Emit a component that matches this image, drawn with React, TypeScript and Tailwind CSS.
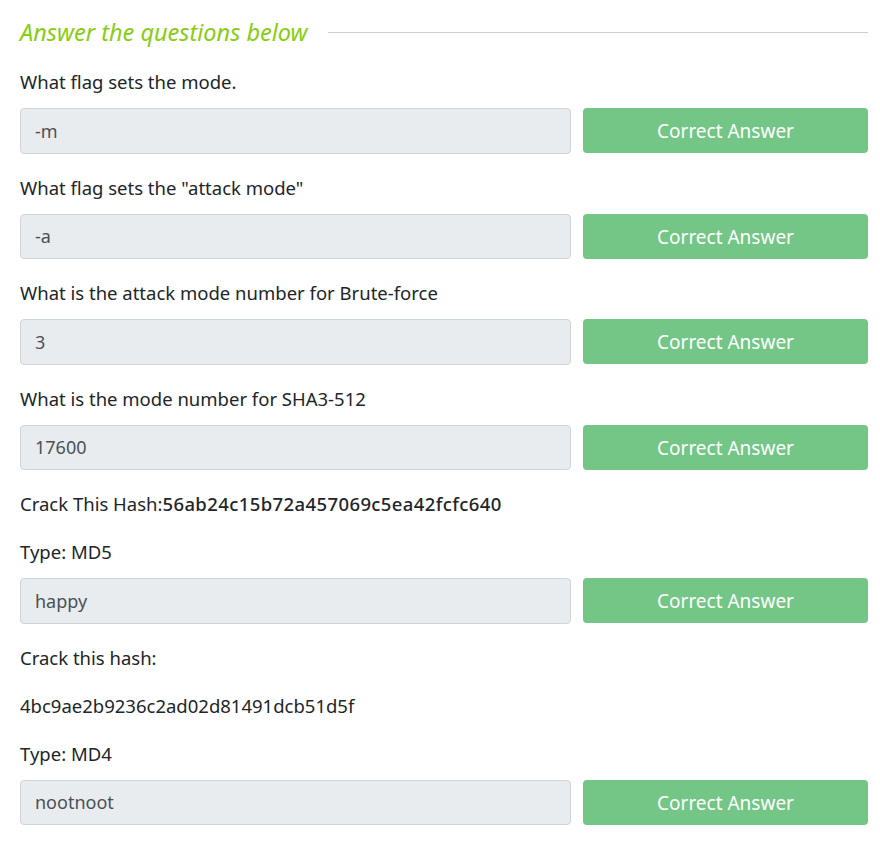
const questions = [
  { q: "What flag sets the mode.", a: "-m" },
  { q: 'What flag sets the "attack mode"', a: "-a" },
  { q: "What is the attack mode number for Brute-force", a: "3" },
  { q: "What is the mode number for SHA3-512", a: "17600" },
];

const AnswerRow = ({ value }: { value: string }) => (
  <div className="flex gap-3 mt-3">
    <input
      readOnly
      value={value}
      className="flex-1 h-[45.5px] px-[14px] rounded bg-[#e9ecef] border border-[#ced4da] text-[#495057] text-[18px] outline-none"
    />
    <button className="w-[285px] h-[45px] pt-[2px] rounded bg-[#73c686] text-white text-[19px]">
      Correct Answer
    </button>
  </div>
);

const Line = ({ children }: { children: React.ReactNode }) => (
  <p className="mt-6 pb-1 leading-5 text-[18.5px] text-[#212529]">{children}</p>
);

export default function App() {
  return (
    <div
      className="w-[880px] min-h-[847px] bg-white pl-5 pr-3 pt-4"
      style={{ fontFamily: '"Noto Sans", "Open Sans", sans-serif' }}
    >
      <div className="flex items-center gap-5 h-8 mb-px">
        <h2 className="italic text-[23.5px] leading-8 text-[#88cc14] whitespace-nowrap">
          Answer the questions below
        </h2>
        <div className="flex-1 h-px bg-[#d0d0d0]" />
      </div>

      {questions.map((item) => (
        <div key={item.q}>
          <Line>{item.q}</Line>
          <AnswerRow value={item.a} />
        </div>
      ))}

      <Line>
        Crack This Hash:
        <span className="font-medium tracking-[0.4px]">56ab24c15b72a457069c5ea42fcfc640</span>
      </Line>
      <Line>Type: MD5</Line>
      <AnswerRow value="happy" />

      <Line>Crack this hash:</Line>
      <Line>4bc9ae2b9236c2ad02d81491dcb51d5f</Line>
      <Line>Type: MD4</Line>
      <AnswerRow value="nootnoot" />
    </div>
  );
}
